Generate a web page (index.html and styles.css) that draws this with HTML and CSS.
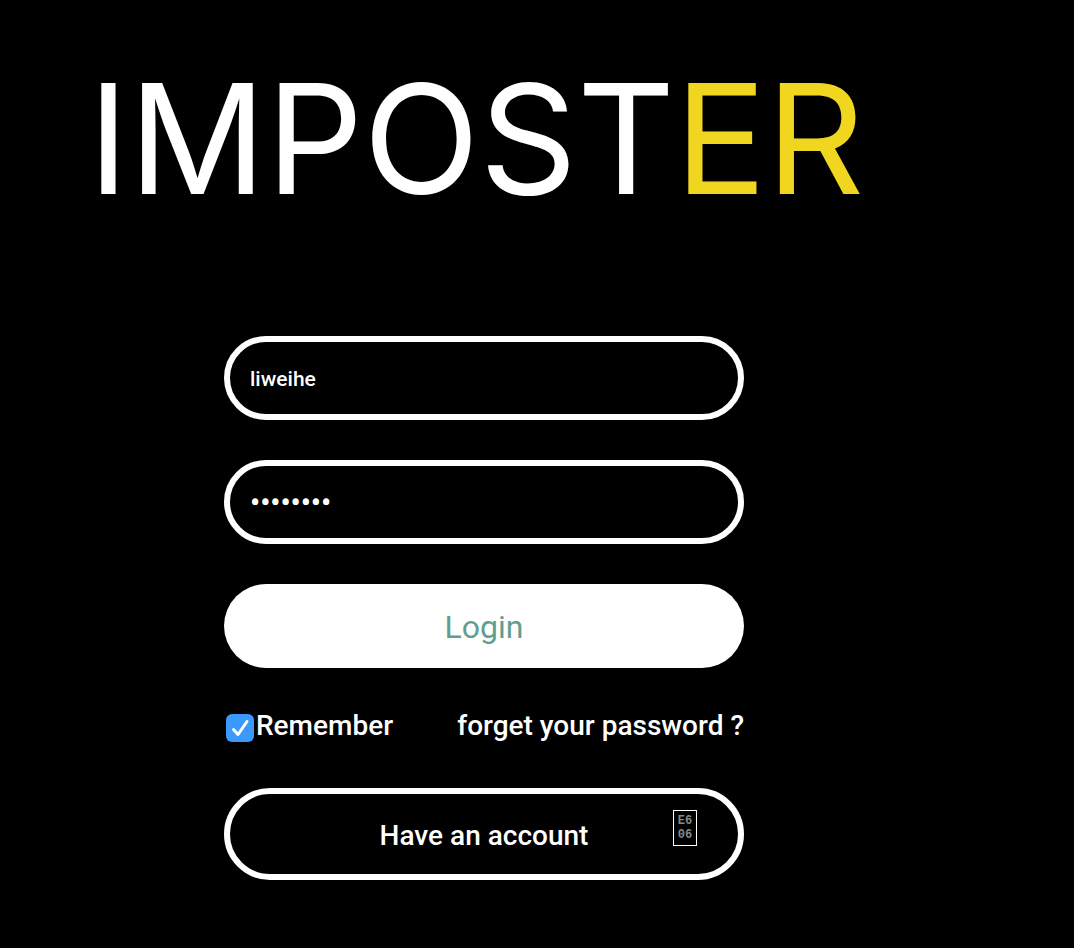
FILE: index.html
```html
<!DOCTYPE html>
<html lang="en">
<head>
<meta charset="utf-8">
<meta name="viewport" content="width=device-width, initial-scale=1">
<title>Imposter</title>
<link rel="stylesheet" href="styles.css">
</head>
<body>
<main class="page">
  <h1 class="logo">IMPOST<span class="logo-accent">ER</span></h1>
  <form class="login">
    <input class="field" type="text" aria-label="Username" value="liweihe">
    <input class="field field-password" type="password" aria-label="Password" value="password">
    <button class="submit" type="submit">Login</button>
    <div class="options">
      <label class="remember"><input class="check" type="checkbox" checked>Remember</label>
      <a class="link" href="#">forget your password ?</a>
    </div>
    <button class="account" type="button">Have an account<span class="glyph"><span>E6</span><span>06</span></span></button>
  </form>
</main>
</body>
</html>
```
FILE: styles.css
```css
* {
  box-sizing: border-box;
}

body {
  margin: 0;
  background: #000;
  color: #fff;
  font-family: Roboto, sans-serif;
}

.page {
  max-width: 968px;
  padding: 49px 0 68px;
}

.logo {
  margin: 0 0 107px;
  padding-left: 88px;
  font: 400 152px/180px Inter, sans-serif;
  white-space: nowrap;
}

.logo-accent {
  color: #f0d61e;
}

.login {
  display: flex;
  flex-direction: column;
  width: 100%;
  max-width: 520px;
  margin: 0 auto;
}

.field {
  width: 100%;
  height: 84px;
  margin: 0 0 40px;
  padding: 2px 20px 0;
  border: 6px solid #fff;
  border-radius: 42px;
  outline: 0;
  background: #000;
  color: #fff;
  font: 500 21px Roboto, sans-serif;
}

.field-password {
  font-size: 29px;
}

.submit {
  height: 84px;
  padding-top: 2px;
  border: 0;
  border-radius: 42px;
  background: #fff;
  color: #5f9f8f;
  font: 400 32px Roboto, sans-serif;
}

.options {
  display: flex;
  justify-content: space-between;
  align-items: flex-start;
  min-height: 40px;
  margin: 40px 0;
  font-size: 28px;
  font-weight: 500;
  line-height: 36px;
}

.remember {
  display: flex;
  align-items: flex-start;
  gap: 2px;
}

.check {
  appearance: none;
  width: 28px;
  height: 28px;
  margin: 6px 0 0 2px;
  border-radius: 6px;
  background: #3b99fc url("data:image/svg+xml,%3Csvg xmlns='http://www.w3.org/2000/svg' viewBox='0 0 28 28'%3E%3Cpath d='M7.5 15.5 12 20.5 21 7.5' fill='none' stroke='white' stroke-width='3' stroke-linecap='round' stroke-linejoin='round'/%3E%3C/svg%3E");
}

.link {
  color: #fff;
  text-decoration: none;
}

.account {
  position: relative;
  height: 92px;
  padding-top: 4px;
  border: 6px solid #fff;
  border-radius: 46px;
  background: #000;
  color: #fff;
  font: 500 28px Roboto, sans-serif;
}

.glyph {
  position: absolute;
  top: 16px;
  right: 41px;
  display: flex;
  flex-direction: column;
  justify-content: center;
  align-items: center;
  width: 24px;
  height: 36px;
  border: 1px solid #fff;
  color: #888;
  font: 700 12px/14px "Liberation Mono", monospace;
}
```
